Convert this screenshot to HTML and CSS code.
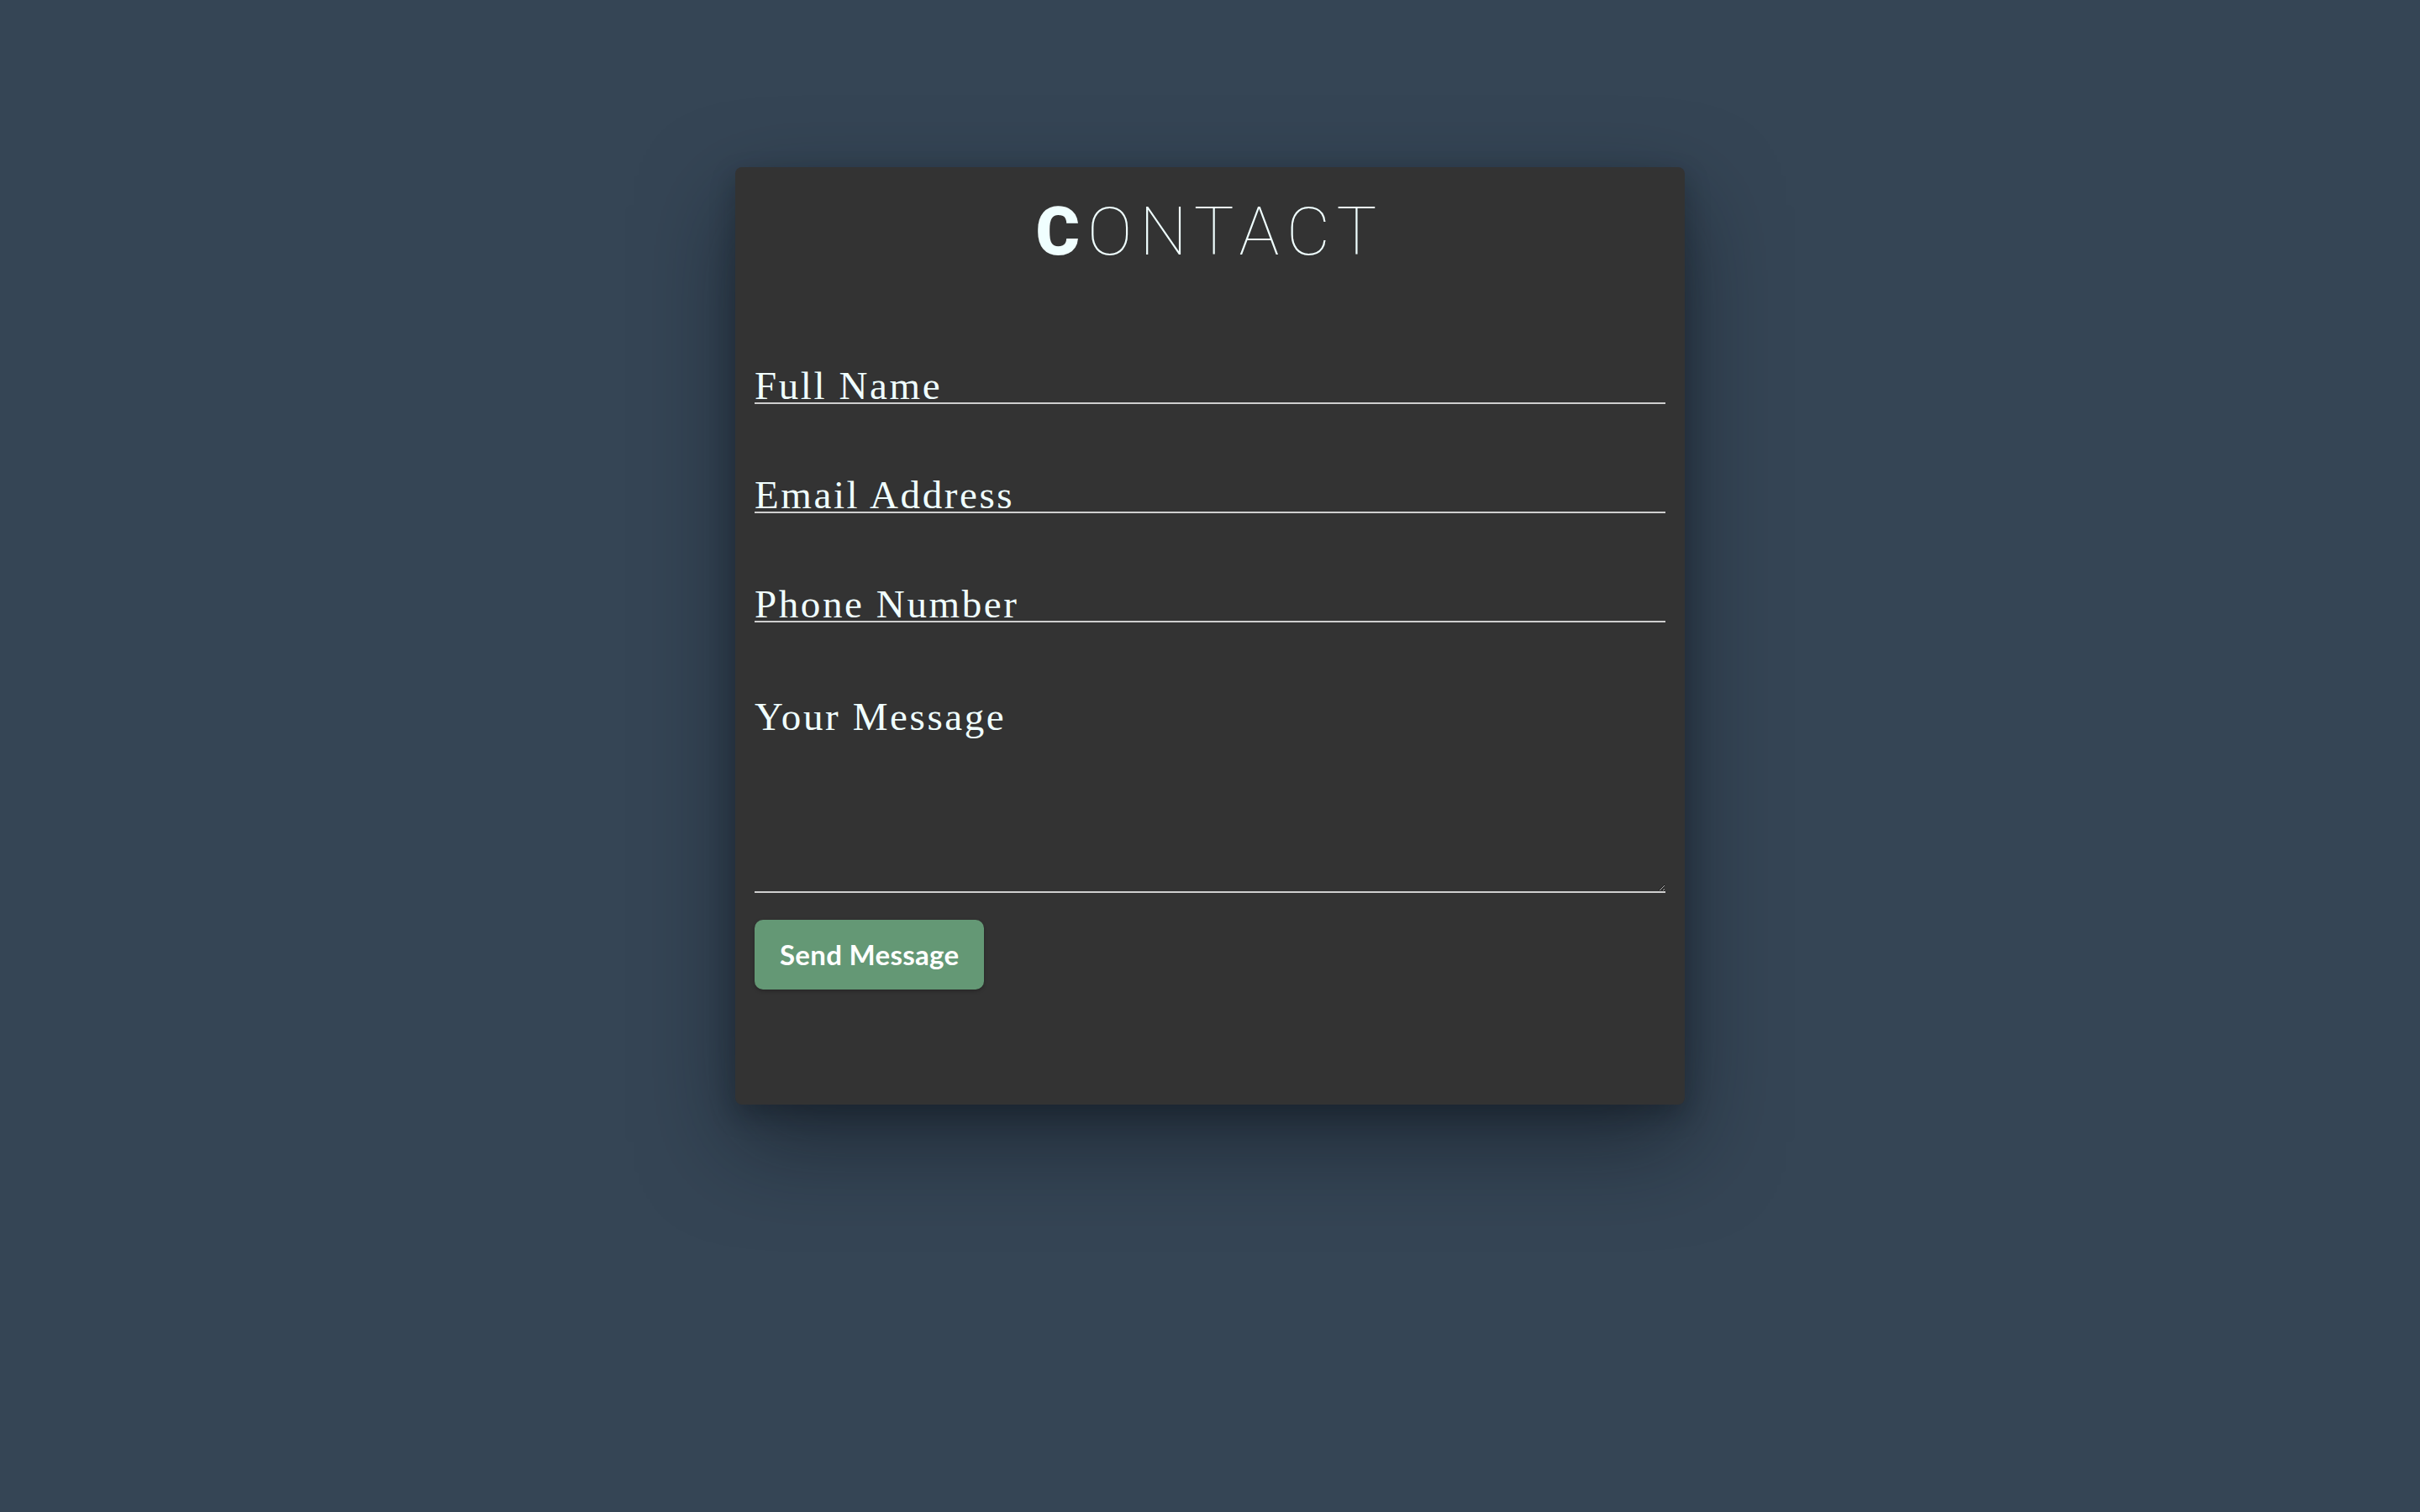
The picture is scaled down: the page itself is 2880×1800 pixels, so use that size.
FILE: index.html
```html
<!DOCTYPE html>
<html lang="en">
<head>
<meta charset="utf-8">
<title>Contact</title>
<link rel="stylesheet" href="styles.css">
</head>
<body>
<main class="page">
  <section class="card">
    <h1 class="title"><span class="title-first">C</span>ONTACT</h1>
    <form class="form">
      <input class="field" type="text" placeholder="Full Name">
      <input class="field" type="email" placeholder="Email Address">
      <input class="field" type="tel" placeholder="Phone Number">
      <textarea class="field field-area" placeholder="Your Message"></textarea>
      <button class="send" type="button">Send Message</button>
    </form>
  </section>
</main>
</body>
</html>
```
FILE: styles.css
```css
html, body {
  margin: 0;
  padding: 0;
}
body {
  background: #354555;
  min-height: 1800px;
  font-family: "Liberation Serif", serif;
}
.page {
  display: flex;
  justify-content: center;
  padding-top: 199px;
}
.card {
  width: 1130px;
  box-sizing: border-box;
  background: #333333;
  border-radius: 8px;
  padding: 30px 23px 137px;
  box-shadow: 0 45px 110px rgba(10, 16, 24, 0.5), 0 12px 30px rgba(10, 16, 24, 0.3);
}
.title {
  margin: 0;
  text-align: center;
  font-family: Roboto, "Liberation Sans", sans-serif;
  font-weight: 100;
  font-size: 80px;
  line-height: 94px;
  letter-spacing: 9px;
  color: #f0ffff;
}
.title-first {
  font-weight: 900;
}
.form {
  display: flex;
  flex-direction: column;
  align-items: flex-start;
  margin-top: 116px;
}
.field {
  display: block;
  width: 100%;
  box-sizing: border-box;
  height: 42px;
  margin: 0 0 88px;
  padding: 0;
  border: none;
  border-bottom: 2px solid #cfcfcf;
  background: transparent;
  color: #f0ffff;
  font-family: "Liberation Serif", serif;
  font-size: 47px;
  line-height: 37px;
  letter-spacing: 2.6px;
  outline: none;
}
.field::placeholder {
  color: #f0ffff;
  opacity: 1;
}
.field-area {
  height: 234px;
  margin-bottom: 32px;
  padding-top: 4px;
  line-height: 40px;
  resize: vertical;
}
.send {
  border: none;
  border-radius: 10px;
  background: #649875;
  color: #ffffff;
  font-family: Lato, "Open Sans", sans-serif;
  font-weight: 700;
  font-size: 33px;
  line-height: 33px;
  letter-spacing: 0.3px;
  padding: 25px 30px;
  box-shadow: 0 2px 4px rgba(0, 0, 0, 0.25);
  cursor: pointer;
}
```
